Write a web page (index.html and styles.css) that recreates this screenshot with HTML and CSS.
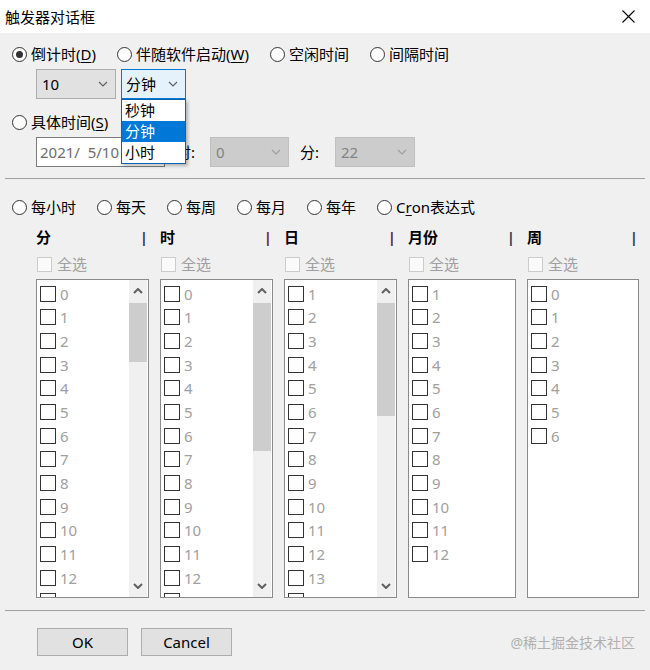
FILE: index.html
```html
<!DOCTYPE html>
<html lang="zh-CN">
<head>
  <meta charset="UTF-8">
  <title>触发器对话框</title>
  <link rel="stylesheet" href="styles.css">
</head>
<body>
  <div class="titlebar">
    <span class="title">触发器对话框</span>
    <svg class="close" width="13" height="13" viewBox="0 0 13 13">
      <path d="M0.5 0.5 L12.5 12.5 M12.5 0.5 L0.5 12.5" stroke="#000" stroke-width="1.1" fill="none"/>
    </svg>
  </div>

  <div class="row mode-row">
    <span class="opt"><span class="radio on"></span>倒计时(<u>D</u>)</span>
    <span class="opt"><span class="radio"></span>伴随软件启动(<u>W</u>)</span>
    <span class="opt"><span class="radio"></span>空闲时间</span>
    <span class="opt"><span class="radio"></span>间隔时间</span>
  </div>

  <div class="row count-row">
    <div class="combo combo-num">
      <span>10</span>
      <svg class="chev" width="10" height="6" viewBox="0 0 10 6"><path d="M1 1 L5 5 L9 1" /></svg>
    </div>
    <div class="combo-wrap">
      <div class="combo combo-unit">
        <span>分钟</span>
        <svg class="chev" width="10" height="6" viewBox="0 0 10 6"><path d="M1 1 L5 5 L9 1" /></svg>
      </div>
      <ul class="popup">
        <li>秒钟</li>
        <li class="sel">分钟</li>
        <li>小时</li>
      </ul>
    </div>
  </div>

  <div class="row exact-row">
    <span class="opt"><span class="radio"></span>具体时间(<u>S</u>)</span>
  </div>

  <div class="row time-row">
    <div class="datebox">2021/&nbsp;&nbsp;5/10</div>
    <span class="lbl lbl-hour">时:</span>
    <div class="combo off combo-hour">
      <span>0</span>
      <svg class="chev" width="10" height="6" viewBox="0 0 10 6"><path d="M1 1 L5 5 L9 1" /></svg>
    </div>
    <span class="lbl lbl-min">分:</span>
    <div class="combo off combo-min">
      <span>22</span>
      <svg class="chev" width="10" height="6" viewBox="0 0 10 6"><path d="M1 1 L5 5 L9 1" /></svg>
    </div>
  </div>

  <div class="sep sep-top"></div>

  <div class="row freq-row">
    <span class="opt"><span class="radio"></span>每小时</span>
    <span class="opt"><span class="radio"></span>每天</span>
    <span class="opt"><span class="radio"></span>每周</span>
    <span class="opt"><span class="radio"></span>每月</span>
    <span class="opt"><span class="radio"></span>每年</span>
    <span class="opt"><span class="radio"></span>C<u>r</u>on表达式</span>
  </div>

  <div class="columns">
    <div class="col">
      <div class="col-head"><b>分</b><b class="bar">|</b></div>
      <div class="all"><span class="box"></span>全选</div>
      <div class="list" data-from="0" data-count="13" data-thumb="59"></div>
    </div>
    <div class="col">
      <div class="col-head"><b>时</b><b class="bar red">|</b></div>
      <div class="all"><span class="box"></span>全选</div>
      <div class="list" data-from="0" data-count="13" data-thumb="148"></div>
    </div>
    <div class="col">
      <div class="col-head"><b>日</b><b class="bar red">|</b></div>
      <div class="all"><span class="box"></span>全选</div>
      <div class="list" data-from="1" data-count="13" data-thumb="113"></div>
    </div>
    <div class="col">
      <div class="col-head"><b>月份</b><b class="bar">|</b></div>
      <div class="all"><span class="box"></span>全选</div>
      <div class="list" data-from="1" data-count="12"></div>
    </div>
    <div class="col">
      <div class="col-head"><b>周</b><b class="bar">|</b></div>
      <div class="all"><span class="box"></span>全选</div>
      <div class="list" data-from="0" data-count="7"></div>
    </div>
  </div>

  <div class="sep sep-bottom"></div>

  <div class="row button-row">
    <button class="btn">OK</button>
    <button class="btn">Cancel</button>
    <span class="mark">@稀土掘金技术社区</span>
  </div>

<script>
  // Build the checkbox lists (and a scroll bar where the list is too long)
  var lists = document.querySelectorAll(".list");
  for (let list of lists) {
    var from  = parseInt(list.dataset.from);
    var count = parseInt(list.dataset.count);
    var items = document.createElement("div");
    items.className = "items";
    for (let i = 0; i < count; i++) {
      var item = document.createElement("div");
      item.className = "item";
      item.innerHTML = '<span class="check"></span>' + (from + i);
      items.appendChild(item);
    }

    if (list.dataset.thumb) {
      // next row is scrolled away, only the top of its box shows
      var cut = document.createElement("div");
      cut.className = "item";
      cut.innerHTML = '<span class="check"></span>';
      items.appendChild(cut);
    }
    list.appendChild(items);

    if (list.dataset.thumb) {
      var bar = document.createElement("div");
      bar.className = "scroll";
      bar.innerHTML =
        '<div class="arrow"><svg width="10" height="6" viewBox="0 0 10 6"><path d="M1 5 L5 1 L9 5"/></svg></div>' +
        '<div class="thumb" style="height:' + list.dataset.thumb + 'px"></div>' +
        '<div class="arrow down"><svg width="10" height="6" viewBox="0 0 10 6"><path d="M1 1 L5 5 L9 1"/></svg></div>';
      list.appendChild(bar);
    }
  }
</script>
</body>
</html>
```

FILE: styles.css
```css
body {
  margin: 0;
  background-color: #f0f0f0;
  font-family: "Noto Sans", "Noto Sans CJK SC", sans-serif;
  font-size: 15px;
  color: #000;
  overflow: hidden;
}

u {
  text-decoration-thickness: 1px;
  text-underline-offset: 2px;
}

.titlebar {
  height: 33px;
  background-color: #fff;
  display: flex;
  align-items: center;
  justify-content: space-between;
  padding: 0 15px 0 5px;
}

.title {
  font-size: 15px;
  line-height: 20px;
}

.row {
  display: flex;
  align-items: center;
}

.opt {
  display: flex;
  align-items: center;
  white-space: nowrap;
  line-height: 22px;
}

.radio {
  width: 15px;
  height: 15px;
  box-sizing: border-box;
  border: 1px solid #333;
  border-radius: 50%;
  background-color: #fff;
  margin-right: 4px;
  display: flex;
  align-items: center;
  justify-content: center;
}

.radio.on::after {
  content: "";
  width: 7px;
  height: 7px;
  border-radius: 50%;
  background-color: #333;
}

.mode-row {
  height: 22px;
  margin: 10px 0 0 12px;
  gap: 21px;
}

.count-row {
  height: 30px;
  margin: 4px 0 0 36px;
  gap: 5px;
}

.combo {
  height: 30px;
  box-sizing: border-box;
  border: 1px solid #adadad;
  background-color: #e1e1e1;
  display: flex;
  align-items: center;
  justify-content: space-between;
  padding: 0 7px 0 5px;
  line-height: 20px;
}

.chev path {
  fill: none;
  stroke: #606060;
  stroke-width: 1.2;
}

.combo-num {
  width: 80px;
}

.combo-wrap {
  position: relative;
}

.combo-unit {
  width: 65px;
  border-color: #0078d7;
  background-color: #e5f1fb;
  padding-left: 4px;
}

.popup {
  position: absolute;
  left: 0;
  top: 30px;
  width: 65px;
  box-sizing: border-box;
  margin: 0;
  padding: 0;
  list-style: none;
  background-color: #fff;
  border: 1px solid #0a64ad;
  box-shadow: 2px 2px 3px rgba(0, 0, 0, 0.25);
}

.popup li {
  height: 21px;
  line-height: 21px;
  padding-left: 3px;
}

.popup li.sel {
  background-color: #0078d7;
  color: #fff;
}

.exact-row {
  height: 22px;
  margin: 12px 0 0 12px;
}

.time-row {
  height: 30px;
  margin: 4px 0 0 36px;
}

.datebox {
  width: 129px;
  height: 30px;
  box-sizing: border-box;
  border: 1px solid #7a7a7a;
  background-color: #fff;
  color: #6d6d6d;
  padding-left: 3px;
  line-height: 28px;
}

.lbl {
  line-height: 20px;
}

.lbl-hour {
  margin-left: 11px;
  width: 34px;
}

.lbl-min {
  margin-left: 11px;
  width: 35px;
}

.combo.off {
  background-color: #cccccc;
  border-color: #bfbfbf;
  color: #838383;
}

.combo.off .chev path {
  stroke: #a0a0a0;
}

.combo-hour {
  width: 79px;
}

.combo-min {
  width: 80px;
}

.sep {
  height: 1px;
  background-color: #a0a0a0;
  margin: 0 5px;
}

.sep-top {
  margin-top: 11px;
}

.freq-row {
  height: 22px;
  margin: 17px 0 0 12px;
  gap: 21px;
}

.columns {
  display: grid;
  grid-template-columns: 113px 113px 113px 108px 112px;
  column-gap: 11px;
  margin: 9px 0 0 36px;
}

.col-head {
  height: 20px;
  line-height: 20px;
  display: flex;
  justify-content: space-between;
  padding-right: 1px;
}

.bar {
  color: #2d3a5a;
}

.bar.red {
  color: #6e1d33;
}

.all {
  height: 18px;
  margin-top: 8px;
  display: flex;
  align-items: center;
  color: #a0a0a0;
  line-height: 18px;
}

.all .box {
  width: 15px;
  height: 15px;
  box-sizing: border-box;
  border: 1px solid #cccccc;
  background-color: #fafafa;
  margin: 0 5px 0 1px;
}

.list {
  margin-top: 6px;
  height: 319px;
  box-sizing: border-box;
  border: 1px solid #8a8a8a;
  background-color: #fff;
  display: flex;
  overflow: hidden;
}

.items {
  flex: 1;
  padding: 2px 0 0 3px;
}

.item {
  height: 23.67px;
  display: flex;
  align-items: center;
  color: #a0a0a0;
  line-height: 20px;
}

.check {
  width: 16px;
  height: 16px;
  box-sizing: border-box;
  border: 1px solid #333;
  margin-right: 4px;
  flex-shrink: 0;
}

.scroll {
  width: 18px;
  margin-right: 1px;
  background-color: #f0f0f0;
  display: flex;
  flex-direction: column;
}

.arrow {
  height: 22px;
  display: flex;
  align-items: center;
  justify-content: center;
}

.arrow path {
  fill: none;
  stroke: #606060;
  stroke-width: 2;
}

.arrow.down {
  margin-top: auto;
}

.thumb {
  margin: 1px 0 0 0;
  background-color: #cdcdcd;
}

.sep-bottom {
  margin-top: 12px;
}

.button-row {
  height: 28px;
  margin: 17px 0 0 37px;
  gap: 13px;
}

.btn {
  width: 91px;
  height: 28px;
  box-sizing: border-box;
  border: 1px solid #adadad;
  background-color: #e1e1e1;
  font-family: "Noto Sans", "Noto Sans CJK SC", sans-serif;
  font-size: 15px;
  color: #000;
  padding: 0;
}

.mark {
  margin-left: auto;
  margin-right: 15px;
  font-size: 14px;
  color: #b0b0b0;
}
```
